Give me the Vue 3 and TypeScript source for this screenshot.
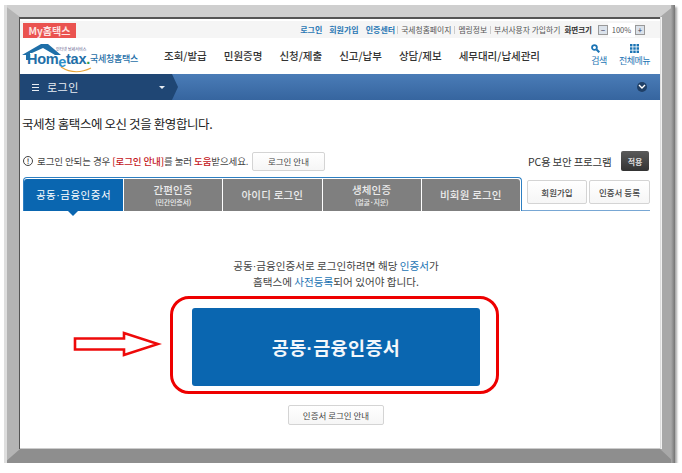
<script setup lang="ts">
const menus: string[] = ['조회/발급', '민원증명', '신청/제출', '신고/납부', '상담/제보', '세무대리/납세관리']
const utilBlue: string[] = ['로그인', '회원가입', '인증센터']
const utilGrey: string[] = ['국세청홈페이지', '멤링정보', '부서사용자 가입하기']
const tabs = [
  { t: '간편인증', s: '(민간인증서)' },
  { t: '아이디 로그인' },
  { t: '생체인증', s: '(얼굴·지문)' },
  { t: '비회원 로그인' },
]
</script>

<template>
  <div class="frame">
    <div class="page">
      <div class="util">
        <span class="my">My홈택스</span>
        <div class="util-right">
          <span v-for="u in utilBlue" :key="u" class="ub">{{ u }}</span>
          <span v-for="u in utilGrey" :key="u" class="ug">{{ u }}</span>
          <b class="zoomlabel">화면크기</b>
          <span class="zb">−</span>
          <span class="pct">100%</span>
          <span class="zb">+</span>
        </div>
      </div>

      <div class="head">
        <div class="logo">
          <svg width="40" height="18" viewBox="0 0 40 18" class="roof">
            <path d="M0 12 L19 1 L26 1 L39 12 L33 12 L21 5 L10 10 L8 10 L8 17 L4 17 L4 12 Z" fill="#1f6fa8" />
          </svg>
          <svg width="34" height="8" viewBox="0 0 34 8" class="smile">
            <path d="M2 1 Q16 10 32 2" fill="none" stroke="#e8a53a" stroke-width="1.2" />
          </svg>
          <span class="logo-tag">인터넷 납세서비스</span>
          <span class="logo-word">Hom<i>e</i>tax<em>.</em></span>
          <span class="logo-ko">국세청홈택스</span>
        </div>
        <nav class="menu">
          <span v-for="m in menus" :key="m">{{ m }}</span>
        </nav>
        <div class="tools">
          <div class="tool search">
            <svg width="9" height="9" viewBox="0 0 13 13">
              <circle cx="5" cy="5" r="3.5" fill="none" stroke="#1c74b4" stroke-width="2.6" />
              <path d="M8 8 L12 12" stroke="#1c74b4" stroke-width="3" />
            </svg>
            <span>검색</span>
          </div>
          <div class="tool">
            <svg width="9" height="9" viewBox="0 0 11 11" fill="#1c74b4">
              <rect x="0" y="0" width="3" height="3" /><rect x="4" y="0" width="3" height="3" /><rect x="8" y="0" width="3" height="3" />
              <rect x="0" y="4" width="3" height="3" /><rect x="4" y="4" width="3" height="3" /><rect x="8" y="4" width="3" height="3" />
              <rect x="0" y="8" width="3" height="3" /><rect x="4" y="8" width="3" height="3" /><rect x="8" y="8" width="3" height="3" />
            </svg>
            <span>전체메뉴</span>
          </div>
        </div>
      </div>

      <div class="crumb">
        <div class="crumb-left">
          <span class="ham"><i></i><i></i><i></i></span>
          <span class="crumb-title">로그인</span>
          <span class="caret"></span>
        </div>
        <svg class="crumb-tip" width="6" height="26" viewBox="0 0 6 26"><path d="M0 0 L6 13 L0 26 Z" fill="#1f4674" /></svg>
        <span class="circle">
          <svg width="8" height="6" viewBox="0 0 8 6"><path d="M1 1 L4 4 L7 1" fill="none" stroke="#fff" stroke-width="1.4" /></svg>
        </span>
      </div>

      <h1 class="welcome">국세청 홈택스에 오신 것을 환영합니다.</h1>

      <div class="info">
        <span class="info-i">!</span>
        <p>로그인 안되는 경우 <b class="red">[로그인 안내]</b>를 눌러 <b class="red">도움</b>받으세요.</p>
        <button class="btn guide">로그인 안내</button>
        <span class="pc">PC용 보안 프로그램</span>
        <button class="apply">적용</button>
      </div>

      <div class="tabrow">
        <div class="tabs">
          <div class="tab active"><span>공동<span class="dot">·</span>금융인증서</span></div>
          <div v-for="t in tabs" :key="t.t" class="tab">
            <span>{{ t.t }}</span>
            <small v-if="t.s">{{ t.s }}</small>
          </div>
        </div>
        <div class="tab-side">
          <button class="btn side s1">회원가입</button>
          <button class="btn side s2">인증서 등록</button>
        </div>
      </div>

      <div class="body">
        <p class="desc">공동<span class="dot">·</span>금융인증서로 로그인하려면 해당 <span class="blue">인증서</span>가</p>
        <p class="desc">홈택스에 <span class="blue">사전등록</span>되어 있어야 합니다.</p>
        <div class="ring">
          <button class="cta">공동<span class="dot">·</span>금융인증서</button>
        </div>
        <svg class="arrow" width="90" height="26" viewBox="0 0 90 26">
          <path d="M3 7.5 L52 7.5 L52 2 L86 13 L52 24 L52 18.5 L3 18.5 Z" fill="#fff" stroke="#ee0a0a" stroke-width="2.6" />
        </svg>
        <button class="btn cert">인증서 로그인 안내</button>
      </div>
    </div>
  </div>
</template>

<style>
html, body { margin: 0; background: #fff; }
</style>

<style scoped>
.frame {
  box-sizing: border-box;
  width: 671px;
  height: 458px;
  margin: 5px 0 0 4px;
  border-style: solid;
  border-width: 12px 15px 14px 16px;
  border-color: #cfcfcf #a8a8a8 #8e8e8e #b4b4b4;
  box-shadow: 2px 2px 2px rgba(0, 0, 0, 0.35);
  font-family: "Noto Sans CJK KR", "Noto Sans", sans-serif;
  color: #333;
  position: relative;
}
.frame::before {
  content: "";
  position: absolute;
  left: -16px;
  top: -12px;
  bottom: -14px;
  width: 3px;
  background: #dedede;
}
.frame::after {
  content: "";
  position: absolute;
  right: -15px;
  top: -12px;
  bottom: -14px;
  width: 4px;
  background: linear-gradient(90deg, #a8a8a8, #747474);
}
.page {
  box-sizing: border-box;
  width: 640px;
  height: 432px;
  background: #fff;
  border-top: 2px solid #555;
  border-bottom: 1px solid #ccc;
  box-shadow: -1px 0 0 #555, 1px 0 0 #ddd, 2px 0 0 #f2f2f2;
  overflow: hidden;
}
.util {
  height: 17px;
  padding: 2px 15px 0 3px;
  margin-top: 2px;
  box-sizing: border-box;
  background: #f5f5f5;
  display: flex;
  justify-content: space-between;
  align-items: flex-start;
}
.my {
  width: 53px;
  height: 15px;
  background: #ea5350;
  color: #fde3e2;
  font-size: 10px;
  font-weight: 700;
  line-height: 15px;
  text-align: center;
}
.util-right {
  display: flex;
  align-items: center;
  height: 14px;
  font-size: 7.8px;
  line-height: 14px;
  white-space: nowrap;
}
.ub { color: #2a78b4; font-weight: 700; margin-right: 7px; font-size: 8px; }
.ub:nth-child(3) { margin-right: 2px; }
.ug { color: #555; padding: 0 3px 0 3px; border-left: 1px solid #ccc; line-height: 8px; }
.zoomlabel { color: #333; font-size: 7.5px; margin: 0 6px 0 1px; }
.zb {
  box-sizing: border-box;
  width: 10px;
  height: 10px;
  border: 1px solid #999;
  background: #dbe2ea;
  font-size: 8px;
  line-height: 7px;
  text-align: center;
  color: #335;
}
.pct { width: 27px; text-align: center; color: #555; background: #fff; font-size: 7.5px; }

.head {
  height: 36px;
  display: flex;
  position: relative;
}
.logo {
  position: relative;
  width: 122px;
  flex: none;
}
.roof { position: absolute; left: 2px; top: 5px; }
.smile { position: absolute; left: 39px; top: 28px; }
.logo-tag {
  position: absolute;
  left: 36px;
  top: 9px;
  font-size: 4px;
  line-height: 5px;
  color: #558;
  white-space: nowrap;
}
.logo-word {
  position: absolute;
  left: 7px;
  top: 13px;
  font-family: "Liberation Sans", sans-serif;
  font-weight: 700;
  font-size: 14.5px;
  line-height: 17px;
  letter-spacing: -0.3px;
  color: #1f6fa8;
}
.logo-word i { font-style: normal; position: relative; top: 3px; color: #2f8fc8; }
.logo-word em { font-style: normal; color: #2c9a4a; }
.logo-ko {
  position: absolute;
  left: 70px;
  top: 14px;
  font-size: 9px;
  line-height: 14px;
  letter-spacing: -0.3px;
  color: #1f6fa8;
  font-weight: 500;
  white-space: nowrap;
}
.menu {
  display: flex;
  gap: 17px;
  margin-left: 22px;
  font-size: 10.5px;
  line-height: 16px;
  padding-top: 10px;
  font-weight: 500;
  color: #333;
  white-space: nowrap;
}
.tools {
  position: absolute;
  right: 10px;
  top: 6px;
  display: flex;
  gap: 12px;
  font-size: 9px;
  color: #1c74b4;
}
.tool {
  display: flex;
  flex-direction: column;
  align-items: center;
  gap: 2px;
  line-height: 12px;
  letter-spacing: -0.5px;
  height: 26px;
}
.tool.search { align-items: flex-start; }

.crumb {
  height: 26px;
  background: linear-gradient(#4a7cb7, #36659f);
  display: flex;
  align-items: center;
  position: relative;
}
.crumb-left {
  width: 152px;
  height: 26px;
  background: #1f4674;
  display: flex;
  align-items: center;
  box-sizing: border-box;
  padding-left: 12px;
  color: #e8edf3;
  position: relative;
}
.crumb-tip { display: block; }
.ham { display: flex; flex-direction: column; gap: 2px; width: 7px; margin-right: 8px; }
.ham i { display: block; height: 1px; background: #e8edf3; }
.crumb-title { font-size: 11px; letter-spacing: 0.5px; }
.caret {
  position: absolute;
  left: 139px;
  top: 12px;
  border: 3px solid transparent;
  border-top-color: #e8edf3;
  border-bottom: 0;
}
.circle {
  position: absolute;
  right: 13px;
  top: 8px;
  width: 10px;
  height: 10px;
  border-radius: 50%;
  background: #1f3f66;
  display: flex;
  align-items: center;
  justify-content: center;
}

.welcome {
  margin: 13px 0 0 2px;
  font-size: 12.5px;
  line-height: 22px;
  font-weight: 400;
  letter-spacing: -0.4px;
  color: #222;
}
.info {
  display: flex;
  align-items: center;
  height: 20px;
  margin-top: 16px;
  padding-left: 3px;
  font-size: 9.5px;
  color: #444;
  white-space: nowrap;
}
.info-i {
  box-sizing: border-box;
  width: 10px;
  height: 10px;
  border: 1px solid #444;
  border-radius: 50%;
  font-size: 7px;
  line-height: 8px;
  text-align: center;
  font-weight: 700;
  margin-right: 4px;
}
.info p { margin: 0; width: 215px; letter-spacing: -0.1px; }
.red { color: #c4161c; font-weight: 500; }
.btn {
  font-family: inherit;
  background: linear-gradient(#fff, #f6f6f6);
  border: 1px solid #d4d4d4;
  border-radius: 2px;
  color: #444;
  font-size: 8.5px;
  padding: 0;
  box-sizing: border-box;
}
.guide { width: 73px; height: 19px; }
.pc { margin-left: 203px; font-size: 10.5px; color: #333; width: 93px; letter-spacing: -0.2px; }
.apply {
  box-sizing: border-box;
  width: 28px;
  height: 20px;
  border: 0;
  border-radius: 2px;
  background: linear-gradient(#5a5a5a, #333);
  color: #ddd;
  font-family: inherit;
  font-size: 8px;
  font-weight: 700;
  padding: 0;
}

.tabrow {
  display: flex;
  margin: 6px 0 0 3px;
  height: 34px;
}
.tabs {
  display: flex;
  width: 499px;
  box-sizing: border-box;
  border: 1px solid #2d7fc2;
  border-bottom: 0;
  border-radius: 4px 4px 0 0;
  padding: 1px 1px 0 0;
  background: #fff;
}
.tab {
  flex: 1;
  margin-left: 1px;
  background: #7f7f7f;
  color: #ececec;
  display: flex;
  flex-direction: column;
  align-items: center;
  justify-content: center;
  font-size: 10.5px;
  line-height: 12px;
  font-weight: 500;
  letter-spacing: 0.2px;
  position: relative;
}
.tab:first-child { margin-left: 0; border-radius: 3px 0 0 0; }
.tab:last-child { border-radius: 0 3px 0 0; }
.tab small { font-size: 7px; line-height: 9px; margin-top: 2px; letter-spacing: -0.2px; font-weight: 500; }
.tab.active { background: #0a66b0; color: #fff; flex: 0 0 99px; font-weight: 400; letter-spacing: 0.5px; }
.tab.active::after {
  content: "";
  position: absolute;
  left: 44px;
  top: 100%;
  border: 5px solid transparent;
  border-top-color: #0a66b0;
  border-bottom: 0;
}
.dot { font-family: "Liberation Sans", sans-serif; }
.tab-side {
  display: flex;
  gap: 2px;
  align-items: flex-start;
  box-sizing: border-box;
  height: 34px;
  width: 128px;
  padding: 3px 0 0 5px;
  border-bottom: 1px solid #78a7d4;
}
.side { height: 24px; font-weight: 500; font-size: 8.5px; }
.s1 { width: 60px; }
.s2 { width: 61px; }

.body {
  position: relative;
  display: flex;
  flex-direction: column;
  align-items: center;
  padding-top: 47px;
  padding-right: 11px;
}
.desc {
  margin: 0 0 0 3px;
  font-size: 10.6px;
  line-height: 16px;
  color: #444;
  white-space: nowrap;
}
.blue { color: #1c74b4; }
.ring {
  box-sizing: border-box;
  width: 329px;
  height: 98px;
  margin-top: 6px;
  border: 3px solid #ee0000;
  border-radius: 19px;
  padding: 9px 16px 8px 19px;
  background: #fff;
}
.cta {
  display: block;
  width: 288px;
  height: 78px;
  border: 0;
  border-radius: 3px;
  background: #0a66b0;
  color: #f3f7fb;
  font-family: inherit;
  font-size: 18.5px;
  font-weight: 700;
  letter-spacing: 0.4px;
}
.arrow {
  position: absolute;
  left: 52px;
  top: 120px;
}
.btn.cert {
  width: 96px;
  height: 20px;
  margin: 11px 0 0 3px;
  font-size: 8.5px;
}
</style>
